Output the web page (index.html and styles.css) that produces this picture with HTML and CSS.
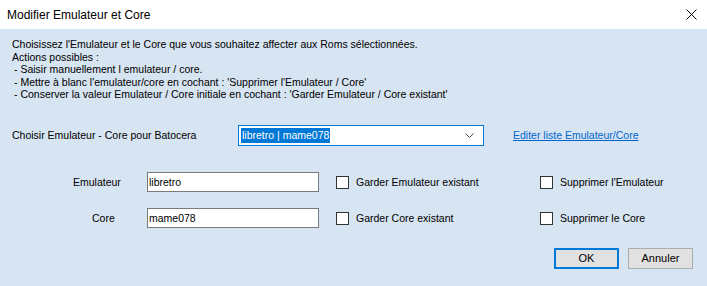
FILE: index.html
```html
<!DOCTYPE html>
<html lang="fr">

<head>
    <meta charset="UTF-8">
    <meta name="viewport" content="width=device-width, initial-scale=1.0">
    <title>Modifier Emulateur et Core</title>
    <link rel="stylesheet" href="styles.css">
</head>

<body>
    <div class="window">
        <div class="titlebar">
            <span class="title">Modifier Emulateur et Core</span>
            <svg class="close" width="11" height="11" viewBox="0 0 11 11">
                <path d="M0.5 0.5 L10.5 10.5 M10.5 0.5 L0.5 10.5" stroke="#000" stroke-width="1" fill="none"/>
            </svg>
        </div>
        <div class="content">
            <div class="intro">
                <p>Choisissez l'Emulateur et le Core que vous souhaitez affecter aux Roms sélectionnées.</p>
                <p>Actions possibles :</p>
                <p class="item">- Saisir manuellement l emulateur / core.</p>
                <p class="item">- Mettre à blanc l'emulateur/core en cochant : 'Supprimer l'Emulateur / Core'</p>
                <p class="item">- Conserver la valeur Emulateur / Core initiale en cochant : 'Garder Emulateur / Core existant'</p>
            </div>

            <div class="choose-row">
                <span class="choose-label">Choisir Emulateur - Core pour Batocera</span>
                <div class="combo">
                    <span class="selected">libretro | mame078</span>
                    <svg class="arrow" width="9" height="5" viewBox="0 0 9 5">
                        <path d="M0.5 0.5 L4.5 4.5 L8.5 0.5" stroke="#444" stroke-width="1" fill="none"/>
                    </svg>
                </div>
                <a class="edit-link" href="#">Editer liste Emulateur/Core</a>
            </div>

            <div class="fields">
                <span class="field-label emu">Emulateur</span>
                <div class="textbox">libretro</div>
                <label class="check keep"><span class="box"></span>Garder Emulateur existant</label>
                <label class="check"><span class="box"></span>Supprimer l'Emulateur</label>

                <span class="field-label core">Core</span>
                <div class="textbox">mame078</div>
                <label class="check keep"><span class="box"></span>Garder Core existant</label>
                <label class="check"><span class="box"></span>Supprimer le Core</label>
            </div>

            <div class="actions">
                <button class="btn btn-default">OK</button>
                <button class="btn">Annuler</button>
            </div>
        </div>
    </div>
</body>

</html>
```

FILE: styles.css
```css
body {
    margin: 0;
    font-family: "Liberation Sans", Arial, sans-serif;
    font-size: 10.5px;
    color: #000000;
    background: #d7e4f2;
}

.window {
    width: 707px;
    height: 286px;
    display: flex;
    flex-direction: column;
}

.titlebar {
    height: 29px;
    background: #ffffff;
    display: flex;
    align-items: center;
    justify-content: space-between;
    padding: 0 10px 0 7px;
    flex-shrink: 0;
}

.title {
    font-size: 12px;
}

.close {
    display: block;
}

.content {
    flex: 1;
    background: #d7e4f2;
    padding: 9px 14px 0 12px;
}

.intro p {
    margin: 0;
    line-height: 12.5px;
    white-space: nowrap;
}

.intro .item {
    padding-left: 2px;
}

.choose-row {
    display: flex;
    align-items: center;
    margin-top: 24px;
    height: 21px;
}

.choose-label {
    width: 226px;
}

.combo {
    width: 246px;
    height: 21px;
    border: 1px solid #0078d7;
    background: #ffffff;
    display: flex;
    align-items: center;
    justify-content: space-between;
    padding: 0 9px 0 2px;
    box-sizing: border-box;
}

.selected {
    background: #0078d7;
    color: #ffffff;
    line-height: 15px;
    padding: 0 1px;
}

.arrow {
    display: block;
}

.edit-link {
    margin-left: 29px;
    color: #0066cc;
    text-decoration: underline;
}

.fields {
    display: grid;
    grid-template-columns: 135px 172px 221px auto;
    grid-auto-rows: 20px;
    row-gap: 16px;
    align-items: center;
    margin-top: 26px;
}

.field-label.emu {
    padding-left: 61px;
}

.field-label.core {
    padding-left: 80px;
}

.textbox {
    height: 18px;
    border: 1px solid #7a7a7a;
    background: #ffffff;
    line-height: 18px;
    padding-left: 1px;
}

.check {
    display: flex;
    align-items: center;
}

.check.keep {
    margin-left: 17px;
}

.box {
    width: 11px;
    height: 11px;
    border: 1px solid #333333;
    background: #ffffff;
    margin-right: 7px;
    margin-top: 2px;
}

.actions {
    display: flex;
    justify-content: flex-end;
    gap: 9px;
    margin-top: 20px;
}

.btn {
    font-family: "Liberation Sans", Arial, sans-serif;
    font-size: 11px;
    width: 65px;
    height: 21px;
    background: #e1e1e1;
    border: 1px solid #adadad;
    padding: 0;
    color: #000000;
}

.btn-default {
    border: 2px solid #0078d7;
}
```
